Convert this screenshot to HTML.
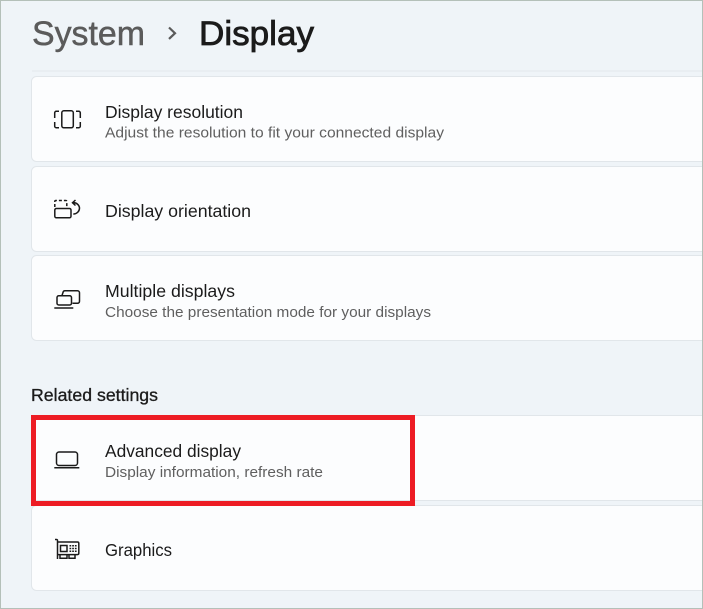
<!DOCTYPE html>
<html><head><meta charset="utf-8"><style>
html,body{margin:0;padding:0;background:#eff4f8}
svg{display:block}
text{font-family:"Liberation Sans",sans-serif}
.h{font-size:34px}
.t{font-size:17.200px;fill:#1b1b1b}
.s{font-size:14.800px;fill:#5f5f5f}
.c{fill:#fcfdfe;stroke:#e1e6ea;stroke-width:1}
.i{fill:none;stroke:#1a1a1a;stroke-width:1.500}
</style></head><body>
<svg width="703" height="609" viewBox="0 0 703 609" xmlns="http://www.w3.org/2000/svg">
<rect width="703" height="609" fill="#eff4f8"/>
<rect x="32" y="70.500" width="670" height="1" fill="#e3e8ec"/>
<rect x="31.500" y="76.500" width="690" height="85" rx="5" class="c"/>
<rect x="31.500" y="166.500" width="690" height="85" rx="5" class="c"/>
<rect x="31.500" y="255.500" width="690" height="85" rx="5" class="c"/>
<rect x="31.500" y="415.500" width="690" height="85" rx="5" class="c"/>
<rect x="31.500" y="505.500" width="690" height="85" rx="5" class="c"/>
<rect y="0" width="703" height="1" fill="#b4c0b9"/>
<rect y="608" width="703" height="1" fill="#b4c0b9"/>
<rect x="0" width="1" height="609" fill="#b4c0b9"/>
<rect x="702" width="1" height="609" fill="#b4c0b9"/>

<text x="32" y="45" class="h" fill="#5b5b5b" textLength="113" lengthAdjust="spacingAndGlyphs" style="stroke:#5b5b5b;stroke-width:.5">System</text>
<path d="M169 27.500l6 5.700-6 5.700" fill="none" stroke="#5b5b5b" stroke-width="2.200"/>
<text x="199" y="45" class="h" fill="#1b1b1b" textLength="115" lengthAdjust="spacingAndGlyphs" style="stroke:#1b1b1b;stroke-width:.8">Display</text>

<text x="105" y="118" class="t" textLength="138" lengthAdjust="spacingAndGlyphs">Display resolution</text>
<text x="105" y="137.500" class="s" textLength="339" lengthAdjust="spacingAndGlyphs">Adjust the resolution to fit your connected display</text>
<text x="105" y="217" class="t" textLength="146" lengthAdjust="spacingAndGlyphs">Display orientation</text>
<text x="105" y="297" class="t" textLength="130" lengthAdjust="spacingAndGlyphs">Multiple displays</text>
<text x="105" y="317" class="s" textLength="326" lengthAdjust="spacingAndGlyphs">Choose the presentation mode for your displays</text>
<text x="31" y="401" class="t" textLength="127" lengthAdjust="spacingAndGlyphs" style="stroke:#1b1b1b;stroke-width:.3">Related settings</text>
<text x="105" y="457" class="t" textLength="136" lengthAdjust="spacingAndGlyphs">Advanced display</text>
<text x="105" y="477" class="s" textLength="218" lengthAdjust="spacingAndGlyphs">Display information, refresh rate</text>
<text x="105" y="556" class="t" textLength="67" lengthAdjust="spacingAndGlyphs">Graphics</text>

<!-- resolution icon -->
<rect x="61.800" y="110.800" width="11.500" height="17" rx="2" class="i"/>
<path class="i" d="M59 111.300h-2.800a1.500 1.500 0 0 0-1.500 1.500v5.200M54.700 122v4.200a1.500 1.500 0 0 0 1.500 1.500H59M76 111.300h2.800a1.500 1.500 0 0 1 1.500 1.500v5.200M80.300 122v4.200a1.500 1.500 0 0 1-1.500 1.500H76"/>
<!-- orientation icon -->
<path class="i" stroke-dasharray="3 2" d="M54.800 207v-5.500a1 1 0 0 1 1-1h10a1 1 0 0 1 1 1v5"/>
<rect x="54.800" y="208.500" width="16.200" height="9.300" rx="1.500" class="i"/>
<path class="i" d="M73 202.700a6 5.800 0 0 1 6.500 5.500 6 6 0 0 1-6.200 5.800M75.500 200l-3 2.700 3 2.800"/>
<!-- multiple displays -->
<path class="i" d="M62 295.500l1-3a2 2 0 0 1 2-1.700h12.500a2 2 0 0 1 2 2v8.500a2 2 0 0 1-2 2h-5"/>
<rect x="57" y="295.700" width="14.500" height="9.300" rx="1.800" class="i"/>
<path class="i" d="M54.300 308h19"/>
<!-- laptop -->
<rect x="56.500" y="452" width="21" height="13.500" rx="2.500" class="i"/>
<path class="i" d="M54.300 467.800h25"/>
<!-- graphics card -->
<path class="i" d="M55 539.500h1.500a1 1 0 0 1 1 1v18.500M57.500 542h20a1.300 1.300 0 0 1 1.300 1.300v10a1.300 1.300 0 0 1-1.300 1.300h-20"/>
<rect x="60.500" y="545.500" width="6.500" height="6" class="i"/>
<path class="i" stroke-dasharray="1.700 1" d="M69.500 545.800h7.500M69.500 548.500h7.500M69.500 551.200h7.500"/>
<path class="i" d="M60 554.500v3.700h7v-3.700M69 554.500v3.700h6v-3.700"/>

<rect x="33.500" y="417.500" width="379" height="86" fill="none" stroke="#ed1c24" stroke-width="5"/>
</svg>
</body></html>
